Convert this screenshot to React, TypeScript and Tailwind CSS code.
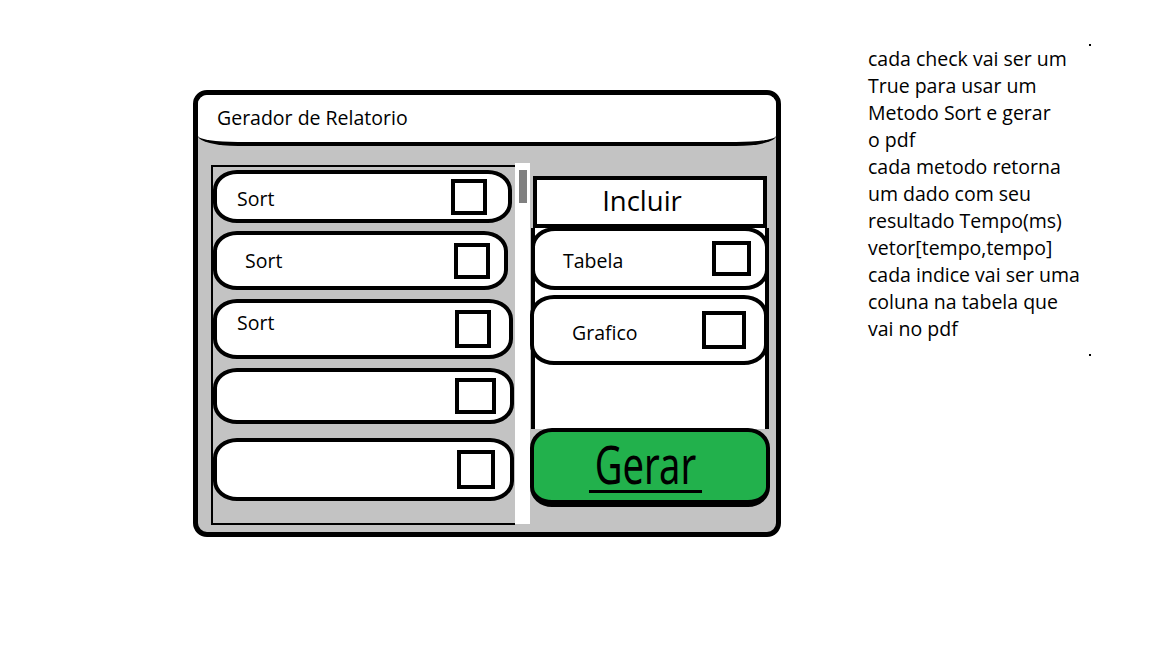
import React from "react";

const font = { fontFamily: '"Open Sans", "Noto Sans", sans-serif' };

function Box({ cls }: { cls: string }) {
  return <div className={`border-[4px] border-black bg-white shrink-0 ${cls}`} />;
}

type Item = { label?: string; h: string; mt: string; w: string; pl: string; pr: string; box: string; textCls?: string };

const items: Item[] = [
  { label: "Sort", h: "h-[53px]", mt: "mt-[3px]", w: "w-[299px]", pl: "pl-[20px]", pr: "pr-[21px]", box: "w-[36px] h-[36px]", textCls: "mt-[5px]" },
  { label: "Sort", h: "h-[59px]", mt: "mt-[8px]", w: "w-[295px]", pl: "pl-[28px]", pr: "pr-[14px]", box: "w-[36px] h-[36px]" },
  { label: "Sort", h: "h-[60px]", mt: "mt-[9px]", w: "w-[300px]", pl: "pl-[20px]", pr: "pr-[18px]", box: "w-[36px] h-[38px]", textCls: "-mt-[12px]" },
  { h: "h-[56px]", mt: "mt-[9px]", w: "w-[301px]", pl: "pl-[20px]", pr: "pr-[14px]", box: "w-[41px] h-[36px]" },
  { h: "h-[63px]", mt: "mt-[14px]", w: "w-[301px]", pl: "pl-[20px]", pr: "pr-[15px]", box: "w-[38px] h-[39px]" },
];

export default function App() {
  return (
    <div className="w-[1152px] h-[648px] bg-white flex items-start text-black" style={font}>
      {/* main window */}
      <div className="ml-[193px] mt-[90px] w-[588px] h-[447px] border-[5px] border-black rounded-[14px] bg-[#c3c3c3] flex flex-col overflow-hidden shrink-0">
        <div className="h-[51px] shrink-0 bg-white border-b-[4px] border-black rounded-bl-[40px_10px] rounded-br-[40px_10px] flex items-center pl-[19px] pb-[1px]">
          <span className="text-[19.5px] leading-none">Gerador de Relatorio</span>
        </div>
        <div className="flex flex-1 items-start pl-[13px]">
          {/* list panel */}
          <div className="mt-[19px] flex h-[360px] w-[319px] shrink-0">
            <div className="flex-1 border-l-2 border-t-2 border-b-2 border-black flex flex-col">
              {items.map((it, i) => (
                <div
                  key={i}
                  className={`${it.h} ${it.mt} ${it.w} ${it.pl} ${it.pr} shrink-0 bg-white border-[4px] border-black rounded-[24px/20px] flex items-center justify-between`}
                >
                  <span className={`text-[19.5px] leading-none ${it.textCls ?? ""}`}>{it.label ?? ""}</span>
                  <Box cls={it.box} />
                </div>
              ))}
            </div>
            <div className="w-[15px] bg-white -mt-[2px] h-[361px] flex justify-center pt-[7px]">
              <div className="w-[8px] h-[33px] bg-[#808080] ml-[1px]" />
            </div>
          </div>
          {/* right column */}
          <div className="mt-[30px] w-[240px] shrink-0 flex flex-col">
            <div className="mx-[3px] h-[52px] border-[4px] border-black bg-white flex items-center justify-center pr-[16px]">
              <span className="text-[27.5px] leading-none pb-[3px]">Incluir</span>
            </div>
            <div className="bg-white border-x-[4px] border-black mx-[1px] flex flex-col">
              <div className="-mx-[4px] h-[63px] -mt-[1px] bg-white border-[4px] border-black rounded-[24px/20px] flex items-center justify-between pl-[28px] pr-[14px]">
                <span className="text-[19.5px] leading-none mt-[4px]">Tabela</span>
                <Box cls="w-[39px] h-[35px]" />
              </div>
              <div className="-mx-[5px] mr-[-3px] mt-[5px] h-[70px] bg-white border-[4px] border-black rounded-[24px/20px] flex items-center justify-between pl-[38px] pr-[18px]">
                <span className="text-[19.5px] leading-none mt-[5px]">Grafico</span>
                <Box cls="w-[44px] h-[38px]" />
              </div>
              <div className="h-[64px]" />
            </div>
            <div className="h-[79px] -mt-[1px] bg-[#22b14c] border-[4px] border-b-[7px] border-black rounded-[22px/20px] flex items-center justify-center">
              <span className="inline-block scale-x-[0.72] text-[53px] leading-none border-b-[3px] border-black px-[8px] -mt-[2px] mr-[10px]" style={{ fontFamily: '"Noto Sans", sans-serif' }}>
                Gerar
              </span>
            </div>
          </div>
        </div>
      </div>
      {/* notes */}
      <div className="ml-[87px] mt-[45px] relative w-[230px] shrink-0">
        <div className="text-[19.5px] leading-[27px] whitespace-pre">
          {"cada check vai ser um\nTrue para usar um\nMetodo Sort e gerar\no pdf\ncada metodo retorna\num dado com seu\nresultado Tempo(ms)\nvetor[tempo,tempo]\ncada indice vai ser uma\ncoluna na tabela que\nvai no pdf"}
        </div>
        <span className="absolute left-[221px] top-[-1px] w-[2px] h-[2px] bg-black" />
        <span className="absolute left-[221px] top-[309px] w-[2px] h-[2px] bg-black" />
      </div>
    </div>
  );
}
